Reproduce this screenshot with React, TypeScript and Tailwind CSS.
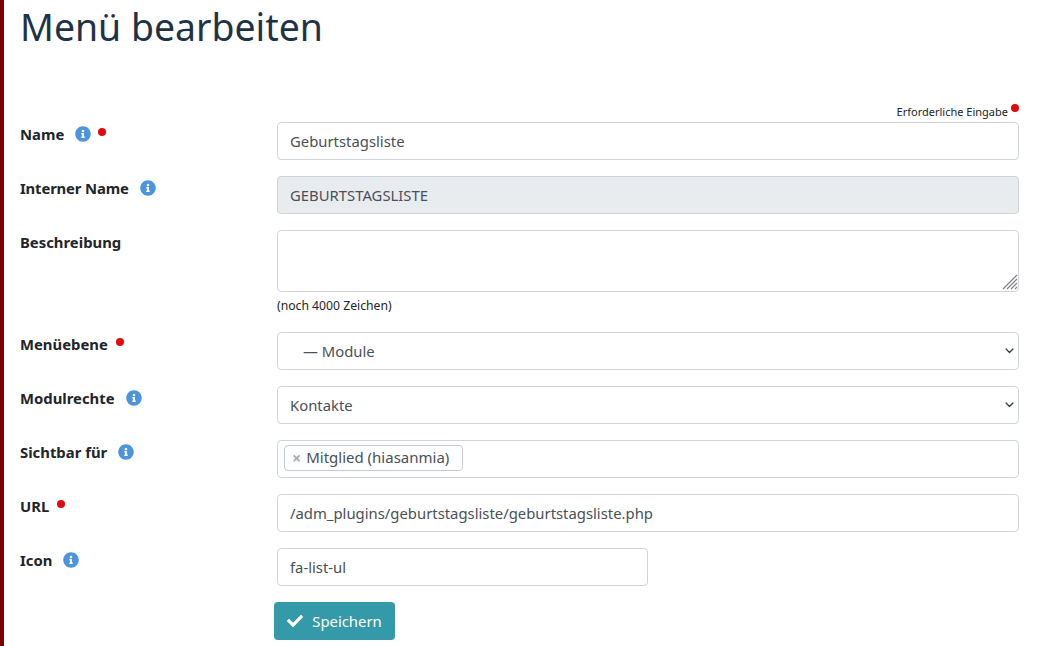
import { ReactNode } from "react";
import { FaCheck, FaInfoCircle } from "react-icons/fa";

const inputClass =
  "block h-[38px] w-full rounded-[4px] border border-[#ced4da] px-3 text-[14.85px] text-[#495057] outline-none";

function RequiredDot() {
  return <span className="mb-[5px] h-2 w-2 rounded-full bg-[#e2090f]" />;
}

type RowProps = {
  label: string;
  info?: boolean;
  required?: boolean;
  tight?: boolean;
  children: ReactNode;
};

function Row({ label, info, required, tight, children }: RowProps) {
  return (
    <div className="mb-4 flex">
      <div className="flex h-[24px] w-[257px] shrink-0 items-center text-[14.85px] font-bold text-[#212529]">
        <span className={tight ? "tracking-[-0.15px]" : ""}>{label}</span>
        {info && <FaInfoCircle className="ml-[11px] h-4 w-4 shrink-0 text-[#4a94e0]" />}
        {required && <span className={info ? "ml-[7px] flex" : "ml-[8px] flex"}><RequiredDot /></span>}
      </div>
      <div className="min-w-0 flex-1">{children}</div>
    </div>
  );
}

function SelectBox({ value, indent }: { value: string; indent?: boolean }) {
  return (
    <div className="relative">
      <select
        defaultValue={value}
        className={`${inputClass} appearance-none bg-white ${indent ? "pl-[25px]" : ""}`}
      >
        <option>{value}</option>
      </select>
      <svg viewBox="0 0 10 7" className="absolute right-[5px] top-[16px] h-[6px] w-[9px]">
        <path d="M1 1.2l4 4 4-4" fill="none" stroke="#343a40" strokeWidth="1.5" strokeLinecap="round" strokeLinejoin="round" />
      </svg>
    </div>
  );
}

export default function App() {
  return (
    <div className="h-[646px] w-[1055px] overflow-hidden border-l-4 border-[#7a0000] bg-white font-['Noto_Sans','Open_Sans',sans-serif]">
      <div className="w-[1015px] pl-4">
        <h1 className="pt-[3px] text-[37.4px] leading-[48px] text-[#1f3347]">Menü bearbeiten</h1>
        <div className="mt-[52px] flex h-[16px] items-start justify-end">
          <span className="text-[11px] leading-[17px] text-[#212529]">Erforderliche Eingabe</span>
          <span className="ml-[3px] mt-[1px] h-2 w-2 rounded-full bg-[#e2090f]" />
        </div>
        <div className="mt-[3px]">
          <Row label="Name" info required>
            <input readOnly value="Geburtstagsliste" className={`${inputClass} bg-white`} />
          </Row>
          <Row label="Interner Name" info tight>
            <input readOnly value="GEBURTSTAGSLISTE" className={`${inputClass} bg-[#e9ecef]`} />
          </Row>
          <div className="mb-[18px] flex">
            <div className="flex h-[24px] w-[257px] shrink-0 items-center text-[14.85px] font-bold text-[#212529]">Beschreibung</div>
            <div className="min-w-0 flex-1">
              <div className="relative">
                <textarea readOnly className="block h-[62px] w-full resize-none rounded-[4px] border border-[#ced4da] bg-white px-3 py-1.5 text-[15px] outline-none" />
                <svg viewBox="0 0 16 16" className="absolute bottom-[2px] right-[1px] h-4 w-4">
                  <path d="M1 15L15 1M5 15L15 5M9 15l6-6M13 15l2-2" fill="none" stroke="#808080" strokeWidth="1.2" />
                </svg>
              </div>
              <p className="mt-[5px] text-[12.2px] leading-[17px] text-[#212529]">(noch 4000 Zeichen)</p>
            </div>
          </div>
          <Row label="Menüebene" required>
            <SelectBox value="— Module" indent />
          </Row>
          <Row label="Modulrechte" info>
            <SelectBox value="Kontakte" />
          </Row>
          <Row label="Sichtbar für" info>
            <div className="flex h-[38px] items-start rounded-[4px] border border-[#ced4da] bg-white px-[6px] pt-[4px]">
              <span className="flex h-[26px] items-center rounded-[4px] border border-[#c2cad8] pb-[1px] pl-[7px] pr-[13px] text-[15px] text-[#495057]">
                <span className="mr-[5px] text-[16px] font-bold text-[#a4adb8]">×</span>
                Mitglied (hiasanmia)
              </span>
            </div>
          </Row>
          <Row label="URL" required>
            <input readOnly value="/adm_plugins/geburtstagsliste/geburtstagsliste.php" className={`${inputClass} bg-white`} />
          </Row>
          <Row label="Icon" info>
            <input readOnly value="fa-list-ul" className={`${inputClass} !w-[371px] bg-white`} />
          </Row>
          <div className="pl-[254px]">
            <button className="flex h-[38px] w-[121px] items-center justify-center rounded-[4px] bg-[#349aa9] text-[14.85px] text-white">
              <FaCheck className="mr-[9px] h-[16px] w-[16px]" />
              Speichern
            </button>
          </div>
        </div>
      </div>
    </div>
  );
}
